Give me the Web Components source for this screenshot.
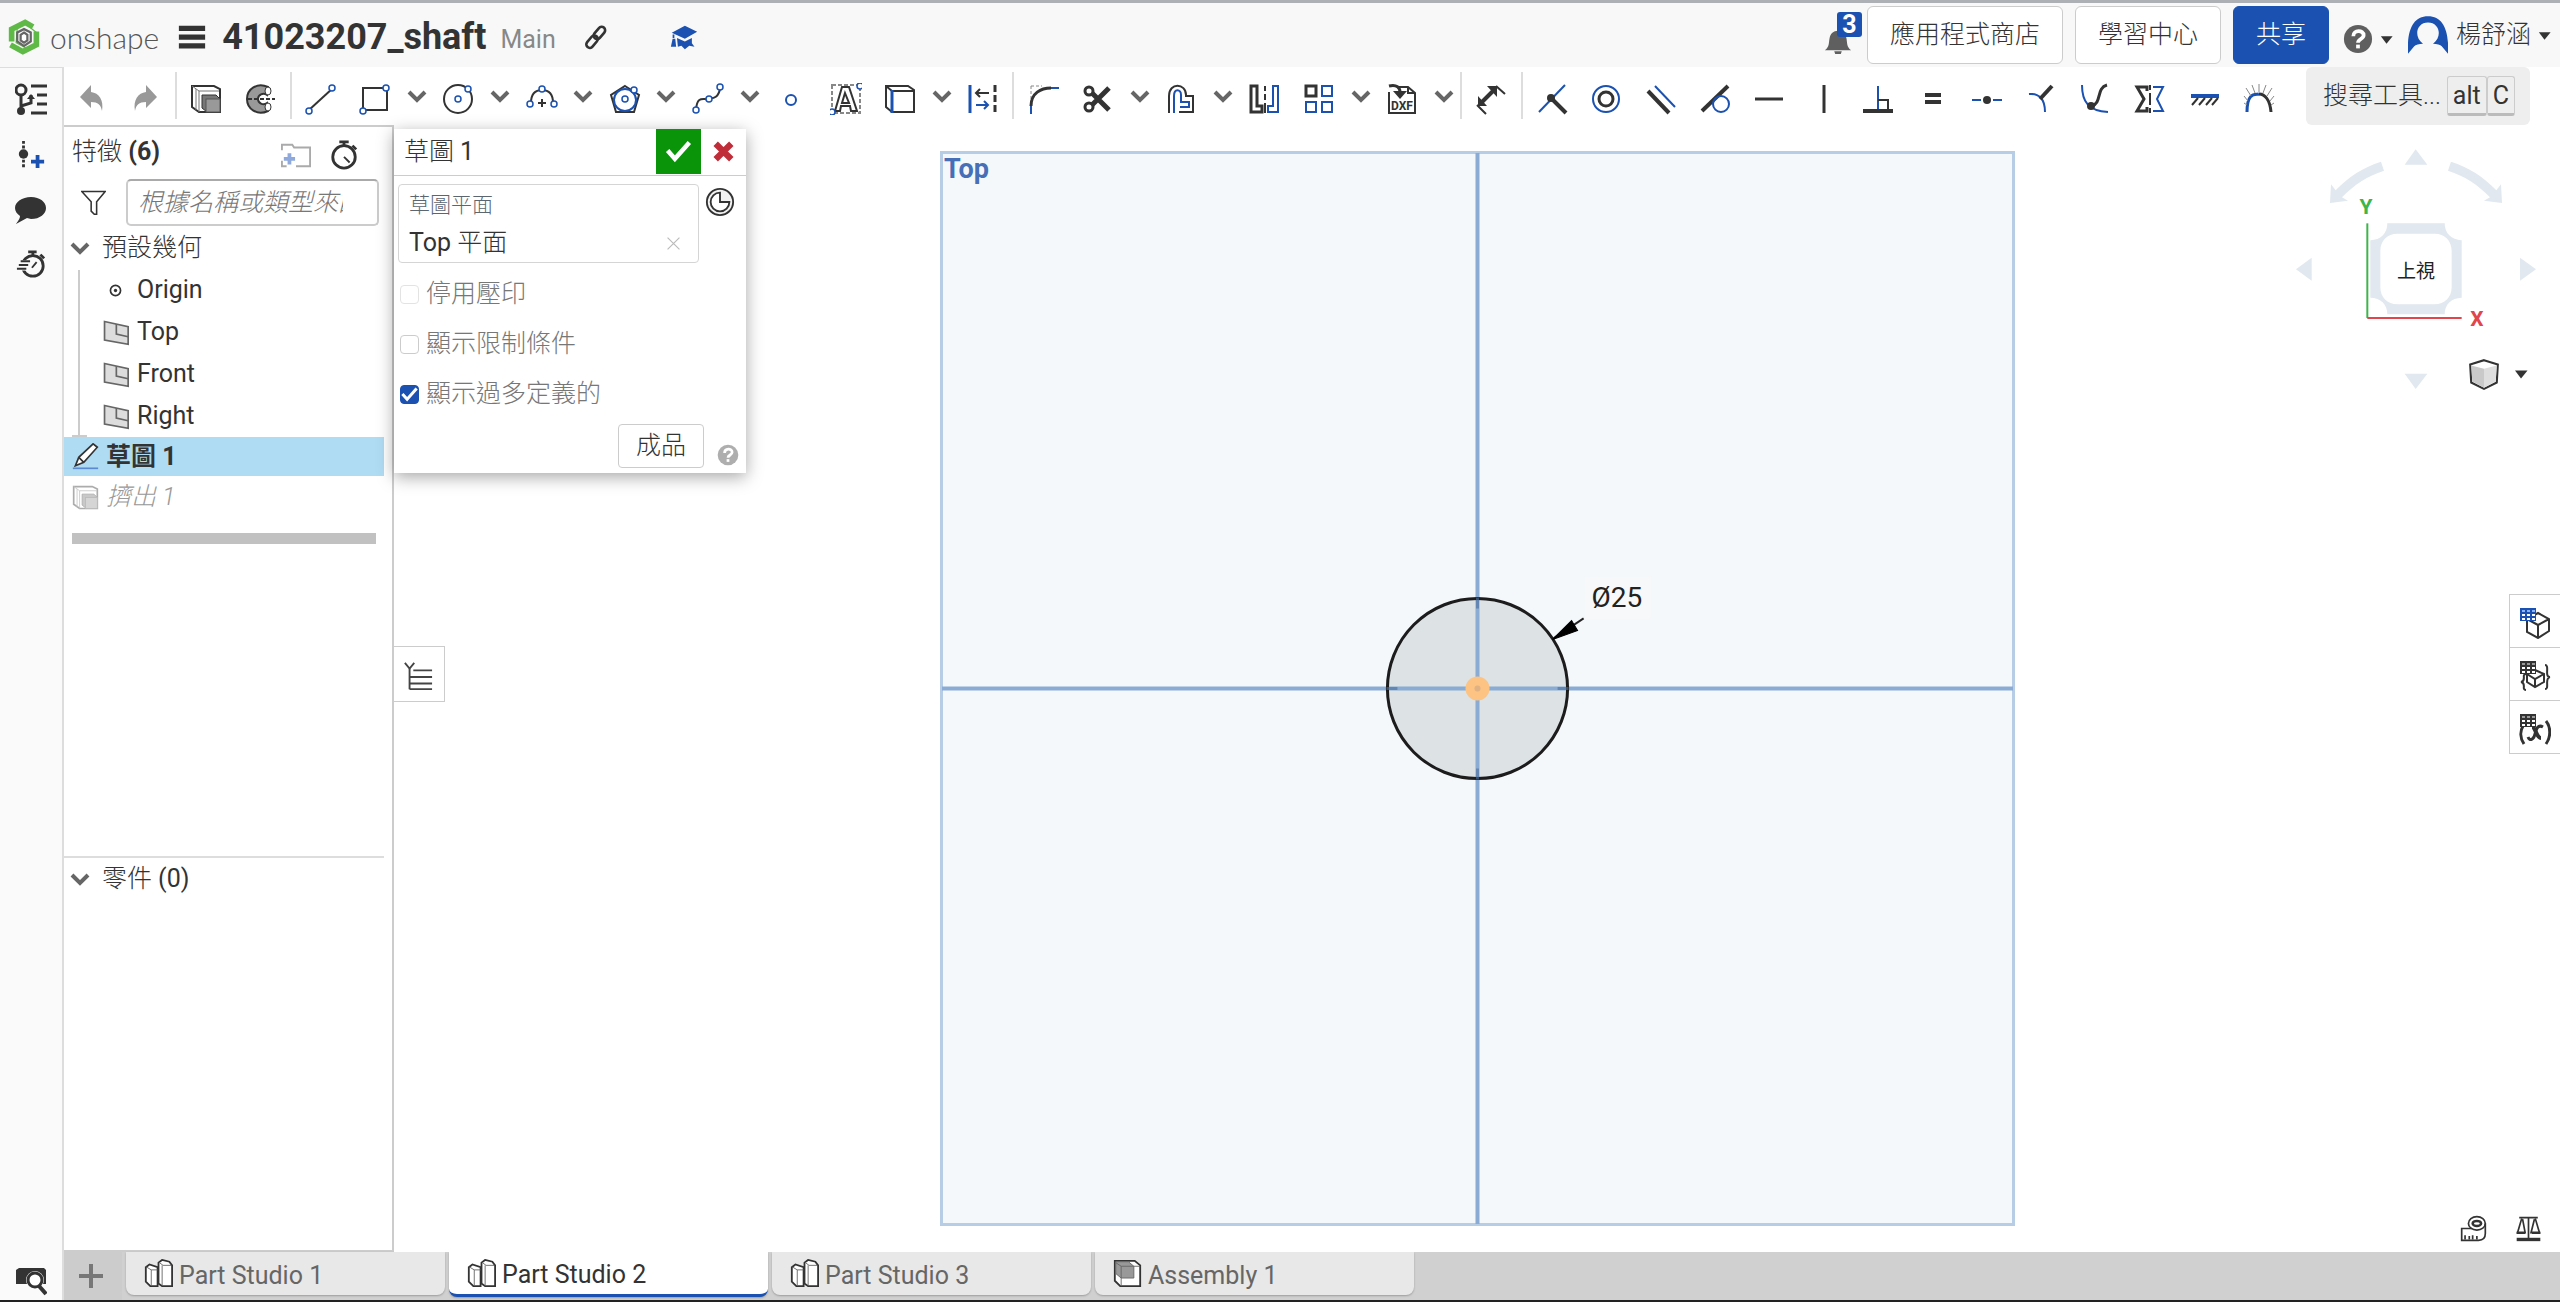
<!DOCTYPE html>
<html lang="zh-Hant">
<head>
<meta charset="utf-8">
<title>41023207_shaft | Part Studio 2</title>
<style>
html,body{margin:0;height:100%}
body{font:400 25px/30px Roboto,"Noto Sans CJK TC",sans-serif;color:#333;background:#fff;overflow:hidden}
</style>
</head>
<body>
<os-app></os-app>
<script>
const K='#333', B='#1b52b1';
const dot=(x,y,r=3)=>`<circle cx="${x}" cy="${y}" r="${r}" fill="#fff" stroke="${B}" stroke-width="1.5"/>`;
const ln=(d,c=K,w=2,x='')=>`<path d="${d}" fill="none" stroke="${c}" stroke-width="${w}" ${x}/>`;
const gridGlyph=(c,l)=>`<rect x="1" y="1" width="16" height="13" fill="${c}"/><g fill="${l}"><path d="M3 3h3v2H3zM8 3h3v2H8zM13 3h3v2h-3z"/></g><g fill="#fff"><path d="M3 7h3v2H3zM8 7h3v2H8zM13 7h3v2h-3zM3 11h3v2H3zM8 11h3v2H8zM13 11h3v2h-3z"/></g>`;
const ICONS={
 logo:ln('M5 20V9L17 3l7 4','#5fb946',5)+ln('M27 11v12l-12 6-11-6','#5fb946',5)+ln('M10 8l-1 13 9 5M22 8l5 4','#5fb946',1)+`<path d="M16 9l6 3v8l-6 4-6-4v-8z" fill="#fff" stroke="#666" stroke-width="2"/><path d="M16 12l3 2v5l-3 2-3-2v-5z" fill="#fff" stroke="#666" stroke-width="2"/>`,
 menu:ln('M1 6H31M1 16H31M1 26H31',K,6),
 link:`<g transform="rotate(-50 16 16)" fill="none" stroke="${K}" stroke-width="3"><rect x="1" y="12" width="16" height="8" rx="4"/><rect x="14" y="12" width="16" height="8" rx="4"/></g>`,
 cap:`<path fill="${B}" d="M2 11L17 3l14 7-14 8zM8 17l9 4 8-4v6l3 4-6-1-5 4-4-4-4 1zM3 13h2v4H3zM3 18h3l1 9H1z"/>`,
 bell:`<path fill="#5f5f5f" d="M2 27c5-4 4-8 5-13 1-5 4-8 9-8s8 3 9 8c1 5 0 9 5 13zM12 28h8l-1 3h-6z"/>`,
 help:`<circle cx="16" cy="16" r="15" fill="#5f5f5f"/><path d="M11 13c0-7 11-7 11-1 0 4-6 4-6 8" fill="none" stroke="#fff" stroke-width="4"/><rect x="14" y="22" width="4" height="4" fill="#fff"/>`,
 user:`<path fill="${B}" d="M0 31C-1 12 4 1 16 1s17 11 16 30l-5-6c-1-1-4-2-7-2 8-6 5-17-4-17S4 17 12 23c-3 0-6 1-7 2z"/>`,
 down:`<path d="M4 9h25L16 25z" fill="${K}"/>`,
 chev:ln('M8 12l8 8 8-8','#666',4),
 undo:`<path fill="#999" d="M5 14L16 2v7c8 1 13 8 11 19-1-6-4-9-11-9v6z"/>`,
 redo:`<path fill="#999" d="M27 14L16 2v7C8 10 3 17 5 28c1-6 4-9 11-9v6z"/>`,
 extrude:`<path d="M2 3H24l6 3V29H9L2 24z" fill="#fff" stroke="${K}" stroke-width="2"/><path d="M2 3l7 5h20M9 8v21M6 6v21" fill="none" stroke="#777"/><path d="M12 12h14l4 4v13H17l-5-4z" fill="#777" stroke="${K}"/><rect x="16" y="16" width="14" height="13" fill="#999" stroke="#555"/>`,
 revolve:`<path d="M24 4C13-1 3 6 3 16s10 17 21 12l-1-8c-4 3-9 0-9-4s5-7 9-4z" fill="#999" stroke="${K}" stroke-width="2"/><ellipse cx="24" cy="8" rx="3" ry="4" fill="#fff" stroke="${K}"/><ellipse cx="24" cy="24" rx="3" ry="4" fill="#fff" stroke="${K}"/>${ln('M4 16H31',K,2,'stroke-dasharray="4 2"')}`,
 line:ln('M4 27L28 5')+dot(4,28)+dot(27,5),
 rect:`<rect x="4" y="5" width="24" height="22" fill="#fff" stroke="${K}" stroke-width="2"/>`+dot(4,28)+dot(27,5),
 circle:`<circle cx="16" cy="16" r="14" fill="none" stroke="${K}" stroke-width="2"/>`+dot(16,16)+dot(26,6),
 arc:ln('M5 20C5 10 10 7 16 7s11 3 11 13')+dot(16,6)+dot(4,21)+dot(28,21)+ln('M12 20h8M16 16v8'),
 polygon:`<path d="M16 3L30 12 25 29H7L2 12z" fill="none" stroke="${K}" stroke-width="2"/><circle cx="16" cy="17" r="11" fill="none" stroke="${B}" stroke-width="2"/>`+dot(16,16)+dot(25,7),
 spline:ln('M4 27C5 12 12 17 16 16s10 0 12-10')+dot(4,27)+dot(17,16)+dot(28,4),
 point:`<circle cx="16" cy="17" r="5" fill="#fff" stroke="${B}" stroke-width="2"/>`,
 text:`<rect x="2" y="2" width="28" height="28" fill="none" stroke="#888" stroke-width="2" stroke-dasharray="4 2"/><path d="M12 4h7l8 24h-6l-1-5h-9l-1 5H5z" fill="#fff" stroke="${K}" stroke-width="2"/><path d="M15 10l4 10h-7z" fill="#fff" stroke="${K}" stroke-width="2"/>`+dot(2,29)+dot(30,3),
 use:`<path d="M2 3H24l6 4V29H8L2 24z" fill="#fff" stroke="${K}" stroke-width="2"/>${ln('M2 3l6 5h22')+ln('M8 7V30',B,3)}`,
 constr:ln('M3 2V30',B,3)+ln('M28 2V30',K,3,'stroke-dasharray="7 3"')+ln('M9 10H22M13 6l-4 4 4 4')+ln('M9 22H21M17 18l4 4-4 4',B),
 fillet:ln('M3 3H14M3 3V16','#888',1,'stroke-dasharray="3 2"')+ln('M3 31V22M22 5H31',B)+ln('M3 23C3 10 13 5 23 5',K,3),
 trim:`<circle cx="7" cy="8" r="4" fill="none" stroke="${K}" stroke-width="3"/><circle cx="7" cy="24" r="4" fill="none" stroke="${K}" stroke-width="3"/>${ln('M10 10L27 27M10 22L27 5',K,5)}`,
 offset:ln('M4 30V13C4-1 21 0 21 12V13H28V29H14')+ln('M9 30V13C9 5 16 6 16 12V19H24V24H15',B),
 mirror:ln('M3 3h6v20h5v6H3z',K,3)+ln('M17 3v5M17 11v6M17 20v10',K)+ln('M30 3h-5v20h-5v6h10z',B),
 pattern:`<rect x="3" y="3" width="10" height="10" fill="none" stroke="${K}" stroke-width="3"/><g fill="none" stroke="${B}" stroke-width="2"><rect x="19" y="3" width="10" height="10"/><rect x="3" y="19" width="10" height="10"/><rect x="19" y="19" width="10" height="10"/></g>`,
 dxf:`<path d="M3 9V30H29V10L22 4H13M22 4v6h7" fill="none" stroke="${K}" stroke-width="2"/>${ln('M3 3c8-2 11 2 11 6',K,3)}<path d="M7 8h14l-7 8z" fill="${K}"/><text x="16" y="27" text-anchor="middle" font-size="12" font-weight="700" fill="${K}">DXF</text>`,
 dim:ln('M6 20L19 7',K,4)+`<path d="M3 23V13l9 10zM22 3v11L12 3z" fill="${K}"/>`+ln('M2 22l9 9M21 3l9 8'),
 coincident:ln('M3 29L29 2',B)+ln('M15 15L30 30',K,4)+`<circle cx="15" cy="15" r="4" fill="${K}"/>`,
 concentric:`<circle cx="16" cy="16" r="13" fill="none" stroke="${B}" stroke-width="2"/><circle cx="16" cy="16" r="7" fill="none" stroke="${K}" stroke-width="3"/>`,
 parallel:ln('M3 8L24 30',K,4)+ln('M10 3L30 24',B),
 tangent:ln('M3 28L29 3',K,4)+`<circle cx="22" cy="21" r="8" fill="none" stroke="${B}" stroke-width="2"/>`,
 horiz:ln('M2 16H30',K,3), vert:ln('M16 2V30',K,3),
 perp:ln('M16 3V27',B)+ln('M16 17h10v10')+ln('M1 28H31',K,4),
 equal:ln('M8 12H24M8 19H24',K,4),
 midpoint:ln('M1 17H10M22 17H31',B)+`<circle cx="16" cy="17" r="4" fill="${K}"/>`,
 normal:ln('M4 11C14 10 20 16 20 29',B)+ln('M15 16L27 3',K,4),
 pierce:ln('M2 2C2 18 8 28 28 29',B)+ln('M12 23C22 20 16 5 27 2',K,3)+`<circle cx="11" cy="23" r="4" fill="${K}"/>`,
 symmetric:ln('M13 8V4H3l7 12L3 28h10v-4',K,3)+ln('M16 2v5M16 10v12M16 25v5')+ln('M19 4h10l-6 12 6 12H19',B),
 fix:ln('M2 13H30',B,4)+ln('M9 15l-6 7M16 15l-6 7M23 15l-6 7M29 15l-6 7',K),
 curvature:ln('M4 29C4 8 13 12 16 11',B,3)+ln('M16 11c6 0 11 6 12 18',K,3)+ln('M16 9V1M12 10L9 2M20 10l3-8M8 13L3 5M24 13l5-8M5 18l-4-5M27 18l4-5M4 22l-3-2M28 22l3-2','#888',1),
 tree:`<circle cx="6" cy="7" r="5" fill="none" stroke="${K}" stroke-width="3"/><circle cx="6" cy="28" r="4" fill="${K}"/>${ln('M6 12V28M6 23l10-3v-8',K,3)}<path d="M12 16l4-5 4 5z" fill="${K}"/>${ln('M16 3H32M22 12H32M22 21H32M16 30H32',K,3)}`,
 insert:ln('M8 2V32',K,3,'stroke-dasharray="3 2"')+`<circle cx="8" cy="16" r="5" fill="${K}"/>`+ln('M16 24H30M23 17V31',B,4),
 comment:`<path d="M16 4c9 0 15 5 15 11s-6 11-15 11l-4-1-11 6c3-4 4-6 4-8-3-2-5-5-5-8C0 9 7 4 16 4z" fill="${K}"/>`,
 timer:`<circle cx="18" cy="18" r="11" fill="none" stroke="${K}" stroke-width="3"/>${ln('M13 3h9M18 3v4M26 6l4 4',K,3)+ln('M17 20l5-6')}<path d="M0 12h14v11H0z" fill="#fafafa"/>${ln('M5 13H15M3 17H13M1 21H11')}`,
 stop:`<circle cx="16" cy="18" r="12" fill="none" stroke="${K}" stroke-width="3"/>${ln('M11 2h10M16 2v4M25 6l4 4',K,3)+ln('M16 18l6 6')}`,
 find:`<path d="M1 6l3-2h25l2 2v14H1z" fill="${K}"/><circle cx="20" cy="16" r="9" fill="#fafafa"/><circle cx="20" cy="16" r="7" fill="#fff" stroke="${K}" stroke-width="3"/>${ln('M24 22l7 8',K,4)}`,
 folder:ln('M1 11V5h11l2 3h17v20H16M1 22v6h5','#aaa')+ln('M3 20H15M9 14V26','#8fa9dc',4),
 funnel:`<path d="M1 2H31L20 15V31H17L13 27V15z" fill="#fff" stroke="${K}" stroke-width="2"/>`,
 origin:`<circle cx="16" cy="16" r="6" fill="#fff" stroke="${K}" stroke-width="2"/><circle cx="16" cy="16" r="2" fill="${K}"/>`,
 plane:`<path d="M3 3L31 9V30L3 25z" fill="#ddd" stroke="#666" stroke-width="2"/>${ln('M17 6V18L31 21','#666')}`,
 pencil:`<path d="M4 27L8 17 25 1l5 4L14 23z" fill="#fff" stroke="${K}" stroke-width="2"/>${ln('M8 17l6 6')+ln('M1 30H31','#5b8ad2')}`,
 check:ln('M4 15l8 9L28 6','#fff',5), cross:ln('M6 6L26 26M26 6L6 26','#c02d38',8), thin:ln('M6 6L26 26M26 6L6 26','#bbb'),
 section:`<circle cx="16" cy="16" r="14" fill="#f2f2f2" stroke="${K}" stroke-width="2"/><path d="M16 6A10 10 0 1 0 26 16H16z" fill="#fff" stroke="${K}" stroke-width="2"/>`,
 outline:ln('M2 2l5 6 5-6','#444',2)+ln('M11 10H31M11 17H31M11 24H31M11 30H31M7 8V30M7 17h4M7 24h4M7 30h4','#444'),
 cube:`<path d="M16 3L29 7 28 24 16 30 4 24 3 7z" fill="#fff" stroke="${K}" stroke-width="2"/><path d="M4 8L16 11V29L5 23z" fill="#c9c9c9"/><path d="M28 8L16 11V29L27 23z" fill="#dedede"/>`,
 cfg:`<path d="M19 6L30 12V24L19 31 8 25V12zM8 12l11 6 11-6M19 18V30" fill="none" stroke="${K}" stroke-width="2"/>`+gridGlyph(B,'#8ab4f5'),
 props:`<path d="M16 10L25 14V22L16 27 8 22V14zM8 14l8 5 9-5M16 19v8" fill="none" stroke="${K}" stroke-width="2"/>${ln('M7 14c-5 0 1 7-5 8 6 1 0 8 5 8M26 5c5 0-1 12 5 12-6 1 0 12-5 12')}`+gridGlyph(K,'#999'),
 vars:ln('M4 13C1 18 1 25 5 31M27 8C32 14 32 24 27 31',K,3)+ln('M9 24c2 5 6 2 7-3s3-10 8-7',K,3)+ln('M13 14c4 0 4 11 9 11',K,4)+gridGlyph(K,'#999'),
 tape:`<path d="M2 16H14M2 15V30H22c6 0 8-4 8-8V10" fill="none" stroke="${K}" stroke-width="2"/><ellipse cx="20" cy="10" rx="10" ry="8" fill="none" stroke="${K}" stroke-width="2"/><ellipse cx="20" cy="10" rx="5" ry="3" fill="none" stroke="${K}" stroke-width="3"/>${ln('M6 29v-5M11 29v-4M15 29v-5M20 29v-4')}`,
 scale:ln('M5 3H27M16 3V28')+ln('M8 4L3 21h9L9 5M23 5l-4 16h10L24 4',K,2)+ln('M2 21H12M20 21H30',K,3)+ln('M2 29H30',K,4),
 plus:ln('M16 4V28M4 16H28','#777',4),
 studio:`<path d="M2 9l4-3 9 3V30H7L2 25z" fill="#fff" stroke="${K}" stroke-width="2"/><path d="M16 4l4-3 8 2 3 4V30H20l-4-3z" fill="#fff" stroke="${K}" stroke-width="2"/>${ln('M3 9l5 3h7M8 12V29M17 4l4 3h9M20 7V29','#666',1)}`,
 assembly:`<path d="M2 2H24l6 5V30H8L2 24z" fill="#fff" stroke="${K}" stroke-width="2"/><path d="M3 3H17l6 5V21H9L3 16z" fill="#999" stroke="#666"/>${ln('M3 4l6 4h21M9 8v22','#666',1)}`
};
class El extends HTMLElement{
  connectedCallback(){
    if(this.shadowRoot) return;
    this.attachShadow({mode:'open'}).innerHTML='<style>*{box-sizing:border-box}button,input,select{font:inherit;color:inherit;margin:0}button{border:0;background:none;padding:0;cursor:pointer}a{color:inherit;text-decoration:none}</style>'+this.view();
  }
}
const define=(n,view)=>customElements.define(n,class extends El{view(){return view(this)}});

define('os-icon',el=>`<style>:host{display:block;flex:none;width:var(--s,32px);height:var(--s,32px)}svg{display:block;width:100%;height:100%}</style><svg viewBox="0 0 32 32" aria-hidden="true">${ICONS[el.getAttribute('name')]}</svg>`);

define('os-header',()=>`<style>
:host{display:flex;align-items:center;height:64px;padding:0 8px 0 6px;background:#f8f8f8;--s:28px}
.left,.right,.help,.who{display:flex;align-items:center}
.left{flex:1;padding-top:3px}
.brand{display:flex;align-items:center;gap:8px;margin-right:19px;--s:36px;font:300 30px/36px Lato,sans-serif;color:#555}
h1{margin:0 14px 0 16px;font-size:36px;line-height:44px}
.main{color:#888;padding-top:6px;margin-right:26px}
.cap{margin-left:60px}
.bell{position:relative;--s:30px;padding-top:10px;margin-right:14px}
.bell b{position:absolute;left:14px;top:-3px;width:25px;height:25px;background:#1b52b1;color:#fff;line-height:25px;border-radius:3px}
.btn{height:58px;padding:0 22px;border:1px solid #ccc;border-radius:6px;background:#fff;margin-right:12px;font-weight:300}
.share{background:#1b52b1;border-color:#1b52b1;color:#fff;margin-right:14px}
.help{--s:30px;gap:6px;padding-top:8px;margin-right:14px}
.who{gap:8px;--s:40px;font-weight:300}
.tri{--s:15px}
.who .tri{margin-left:-2px}
</style>
<div class="left"><a class="brand" href="#"><os-icon name="logo"></os-icon>onshape</a>
<button aria-label="menu"><os-icon name="menu"></os-icon></button><h1>41023207_shaft</h1><span class="main">Main</span>
<button aria-label="link"><os-icon name="link"></os-icon></button><button class="cap" aria-label="learn"><os-icon name="cap"></os-icon></button></div>
<div class="right"><button class="bell" aria-label="notifications"><os-icon name="bell"></os-icon><b>3</b></button>
<button class="btn">應用程式商店</button><button class="btn">學習中心</button><button class="btn share">共享</button>
<button class="help" aria-label="help"><os-icon name="help"></os-icon><os-icon class="tri" name="down"></os-icon></button>
<button class="who"><os-icon name="user"></os-icon>楊舒涵<os-icon class="tri" name="down"></os-icon></button></div>`);

define('os-rail',()=>`<style>:host{display:flex;flex-direction:column;align-items:center;width:64px;flex:none;background:#fafafa;border-right:2px solid #ddd;border-top:1px solid #ddd;padding:15px 0 4px;--s:32px}
button{height:32px;margin-bottom:23px}.mid{--s:30px}.last{margin:auto 0 0}</style>
<button aria-label="tree"><os-icon name="tree"></os-icon></button><button class="mid" aria-label="insert"><os-icon name="insert"></os-icon></button><button aria-label="comments"><os-icon name="comment"></os-icon></button><button class="mid" aria-label="performance"><os-icon name="timer"></os-icon></button><button class="last" aria-label="search"><os-icon name="find"></os-icon></button>`);

const TOOLS='undo redo | extrude revolve | line rect+ circle+ arc+ polygon+ spline+ point text use+ constr | fillet trim+ offset+ mirror pattern+ dxf+ | dim | coincident concentric parallel tangent horiz vert perp equal midpoint normal pierce symmetric fix curvature'.split(' ');
define('os-toolbar',()=>`<style>
:host{display:flex;height:58px;flex:none;background:#fff}
.tools{flex:1;display:flex;align-items:stretch}
.t{flex:17 1 0;min-width:0;display:flex;justify-content:center;align-items:center;padding-top:6px}
.c{flex:9 1 0;min-width:0;display:flex;justify-content:center;align-items:center;--s:32px}
.sep{width:2px;margin:5px 2px 6px;background:#ddd;flex:none}
.search{display:flex;align-items:center;width:224px;margin:0 30px 0 20px;background:#eee;border-radius:6px;padding:0 15px 0 17px;font-weight:300}
.search span{flex:1;text-align:left}
kbd{font:inherit;font-weight:400;height:40px;line-height:38px;padding:0 5px;border:1px solid #ccc;border-bottom:3px solid #bbb;border-radius:3px}
</style><div class="tools">${TOOLS.map(t=>t==='|'?'<i class="sep"></i>':`<button class="t" aria-label="${t.replace('+','')}"><os-icon name="${t.replace('+','')}"></os-icon></button>`+(t.endsWith('+')?'<button class="c" aria-label="more"><os-icon name="chev"></os-icon></button>':'')).join('')}</div>
<button class="search"><span>搜尋工具...</span><kbd>alt</kbd><kbd>C</kbd></button>`);

define('os-row',()=>`<style>
:host{display:flex;align-items:center;gap:8px;height:42px;padding-left:8px;--s:27px}
:host([deep]){padding-left:38px}
:host([top]){font-weight:300;--s:32px;gap:6px;padding-left:0}
:host([active]){height:39px;background:#b0dcf3;font-weight:700}
:host([off]){color:#999;font-style:italic;font-weight:300}
:host([active]),:host([off]){gap:7px}
</style><slot name="icon"></slot><slot></slot>`);

define('feature-panel',()=>`<style>
:host{display:flex;flex-direction:column;width:330px;flex:none;border-top:2px solid #ccc;border-right:2px solid #ccc;border-bottom:2px solid #ccc;background:#fff;padding-right:8px}
.head{display:flex;align-items:center;height:50px;padding:0 25px 0 8px;gap:18px;--s:30px}
.head span{flex:1}.head button{padding-top:6px}
.cjk{font-weight:300}
.filter{display:flex;align-items:center;padding:0 5px 0 17px;gap:20px;height:50px;--s:25px}
input{flex:1;min-width:0;height:47px;border:2px solid #ccc;border-top-color:#aaa;border-radius:5px;padding:0 34px 0 10px;background:#fff;font-weight:300}
input::placeholder{font-style:italic;color:#777;opacity:1}
.group{position:relative}
.group::before{content:"";position:absolute;left:14px;top:1px;bottom:2px;width:2px;background:#ccc}
.group::after{content:"";position:absolute;left:8px;bottom:0;width:15px;height:2px;background:#ccc}
.bar{height:11px;background:#c1c1c1;margin:15px 8px 0;flex:none}
.parts{margin-top:312px;border-top:2px solid #ddd}
</style>
<div class="head"><span><span class="cjk">特徵</span> <b>(6)</b></span><button aria-label="folder"><os-icon name="folder"></os-icon></button><button aria-label="regen"><os-icon name="stop"></os-icon></button></div>
<label class="filter"><os-icon name="funnel"></os-icon><input placeholder="根據名稱或類型來篩選" aria-label="filter"></label>
<os-row top><os-icon slot="icon" name="chev"></os-icon>預設幾何</os-row>
<div class="group"><os-row deep><os-icon slot="icon" name="origin"></os-icon>Origin</os-row>
${['Top','Front','Right'].map(n=>`<os-row deep><os-icon slot="icon" name="plane"></os-icon>${n}</os-row>`).join('')}</div>
<os-row active><os-icon slot="icon" name="pencil"></os-icon>草圖 1</os-row>
<os-row off><os-icon slot="icon" name="extrude" style="opacity:.4"></os-icon>擠出 1</os-row>
<div class="bar"></div>
<div class="parts"><os-row top><os-icon slot="icon" name="chev"></os-icon><span>零件 <span style="font-weight:400">(0)</span></span></os-row></div>`);

define('sketch-dialog',()=>`<style>
:host{display:block;width:352px;height:344px;background:#fff;box-shadow:0 4px 16px rgba(0,0,0,.35)}
.head{display:flex;height:47px;border-bottom:1px solid #ccc;padding-left:10px;align-items:center;font-weight:300}
.head span{flex:1}.ok,.no{width:45px;height:45px;display:grid;place-items:center;align-self:start}.ok{background:#0a940a;--s:29px}.no{--s:25px}
.pick{display:flex;gap:6px;padding:8px 11px 0 4px}
.field{flex:1;height:79px;border:1px solid #d5d5d5;border-radius:4px;padding:5px 15px 0 10px}
.lab{font-size:21px;font-weight:300;color:#5b6670}
.val{display:flex;align-items:center;justify-content:space-between;margin-top:8px;--s:19px}
.val i{font-style:normal;font-weight:300}
label{display:flex;align-items:center;gap:7px;height:50px;padding-left:6px;font-weight:300;color:#777}
.opts{padding-top:6px}
input{appearance:none;width:19px;height:19px;border:1px solid #ccc;border-radius:4px;background:#fff}
input:disabled{border-color:#e3e3e3}
.tick{display:grid}.tick>*{grid-area:1/1;--s:19px}
input:checked{background:#1b52b1;border-color:#1b52b1}
.foot{display:flex;justify-content:flex-end;align-items:flex-start;gap:13px;padding:5px 7px 0;--s:22px}
.done{height:44px;width:86px;border:1px solid #ccc;border-radius:4px;font-weight:300}
.q{opacity:.5;padding-top:20px}
</style>
<div class="head"><span>草圖 <b>1</b></span><button class="ok" aria-label="accept"><os-icon name="check"></os-icon></button><button class="no" aria-label="cancel"><os-icon name="cross"></os-icon></button></div>
<div class="pick"><div class="field"><div class="lab">草圖平面</div><div class="val"><span>Top <i>平面</i></span><button aria-label="clear"><os-icon name="thin"></os-icon></button></div></div><button aria-label="section" style="height:36px;--s:30px"><os-icon name="section"></os-icon></button></div>
<div class="opts"><label><input type="checkbox" disabled>停用壓印</label><label><input type="checkbox">顯示限制條件</label><label><span class="tick"><input type="checkbox" checked><os-icon name="check"></os-icon></span>顯示過多定義的</label></div>
<div class="foot"><button class="done">成品</button><button class="q" aria-label="help"><os-icon name="help"></os-icon></button></div>`);

define('view-cube',()=>`<style>:host{display:block;width:280px;height:280px}svg{display:block}</style>
<svg width="280" height="280" viewBox="0 0 280 280"><g transform="scale(.33333)"><g fill="#e1e8ef"><path d="M407 58l35 46h-68zM407 777l35-46h-68zM48 418l47-35v69zM768 418l-48-35v69z"/><path d="M303 95l9 27C262 138 220 166 186 202l18 10-54 7 3-56 14 18C206 140 250 112 303 95z"/><path d="M513 95l-9 27c50 16 92 44 126 80l-18 10 54 7-3-56-14 18C610 140 566 112 513 95z"/><path fill-rule="evenodd" d="M322 280H494c0 30 20 50 51 51V503c-31 1-51 20-51 50H322c0-30-20-50-51-50V331c31-1 51-20 51-51zM352 311c-30 0-51 21-51 51V472c0 30 21 51 51 51H464c30 0 51-21 51-51V362c0-30-21-51-51-51z"/></g>
<path d="M262 280V564" stroke="#3db54a" stroke-width="6"/><path d="M262 564H545" stroke="#e0464b" stroke-width="6"/></g>
<g text-anchor="middle" font-weight="700"><text x="86" y="84" font-size="21" fill="#3db54a">Y</text><text x="197" y="196" font-size="21" fill="#e0464b">X</text><text x="136" y="148" font-size="19" font-weight="400" fill="#222">上視</text></g></svg>`);

define('graphics-view',()=>`<style>
:host{flex:1;display:flex;justify-content:center;padding:26px 0;position:relative;min-width:0;background:#fff}
.scene{height:100%;aspect-ratio:1;display:block}
sketch-dialog{position:absolute;left:0;top:4px}
view-cube{position:absolute;right:0;top:5px}
.iso{position:absolute;right:31px;top:232px;display:flex;align-items:center;gap:12px;--s:34px}
.iso .tri{--s:16px}
.list{position:absolute;left:0;top:521px;width:51px;height:56px;border:1px solid #ccc;border-left:0;background:#fff;padding:4px 0 0 9px;--s:30px}
.tables{position:absolute;right:0;top:469px;width:51px;border:1px solid #ccc;border-right:0;background:#fff}
.tables button{display:flex;width:100%;height:52px;justify-content:center;align-items:center;padding-top:4px}
.tables button+button{border-top:1px solid #ccc;height:53px}
.measure{position:absolute;right:18px;bottom:10px;display:flex;gap:28px;--s:27px}
</style>
<svg class="scene" viewBox="0 0 1074 1074"><rect x="1" y="1" width="1072" height="1072" rx="2" fill="#f4f8fb" stroke="#b7cce5" stroke-width="4"/>
<circle cx="537" cy="537" r="90" fill="#dde2e5"/><path d="M537 2V1072M2 537H1072" stroke="#8aabd4" stroke-width="4"/>
<circle cx="537" cy="537" r="90" fill="none" stroke="#1c1c1c" stroke-width="3"/><circle cx="537" cy="537" r="12" fill="#fdc383"/><circle cx="537" cy="537" r="3" fill="#dfb183"/>
<path d="M537 446V457M537 617V628M446 537H457M617 537H628" stroke="#4a6f9e" stroke-width="3" opacity=".6"/>
<path d="M643 467L613 487" stroke="#222" stroke-width="2"/><path d="M612 488l19-19 6 10z" stroke="#000" fill="#000"/>
<rect x="644" y="425" width="67" height="43" fill="#f6f8fa"/><text x="651" y="456" font-size="28" fill="#222">Ø25</text>
<text x="4" y="27" font-size="27" font-weight="700" fill="#466fb8">Top</text></svg>
<button class="list" aria-label="list"><os-icon name="outline"></os-icon></button>
<sketch-dialog></sketch-dialog><view-cube></view-cube>
<button class="iso" aria-label="view"><os-icon name="cube"></os-icon><os-icon class="tri" name="down"></os-icon></button>
<div class="tables"><button aria-label="configurations"><os-icon name="cfg"></os-icon></button><button aria-label="properties"><os-icon name="props"></os-icon></button><button aria-label="variables"><os-icon name="vars"></os-icon></button></div>
<div class="measure"><button aria-label="measure"><os-icon name="tape"></os-icon></button><button aria-label="mass"><os-icon name="scale"></os-icon></button></div>`);

define('os-tab',el=>`<style>
:host{display:block;width:319px;height:43px}
a{display:flex;align-items:center;gap:6px;height:100%;padding:0 0 0 18px;background:#e8e8e8;color:#666;border-radius:0 0 8px 8px;box-shadow:0 1px 2px rgba(0,0,0,.25);--s:29px}
:host([active]) a{background:#fff;color:#333;border-bottom:3px solid #1b52b1;height:45px}
span{padding-top:4px}
</style><a href="#"><os-icon name="${el.getAttribute('icon')}"></os-icon><span><slot></slot></span></a>`);

define('tab-bar',()=>`<style>
:host{display:flex;gap:4px;height:48px;flex:none;background:#d0d0d0}
.add{width:58px;padding-right:5px;display:grid;place-items:center;background:#ccc;--s:32px}
</style><button class="add" aria-label="add"><os-icon name="plus"></os-icon></button>
<os-tab icon="studio">Part Studio 1</os-tab><os-tab icon="studio" active>Part Studio 2</os-tab><os-tab icon="studio">Part Studio 3</os-tab><os-tab icon="assembly">Assembly 1</os-tab>`);

define('os-app',()=>`<style>
:host{display:flex;flex-direction:column;height:100vh;box-sizing:border-box;border-top:3px solid #adb0b4;border-bottom:2px solid #222}
.body,.work{flex:1;display:flex;min-height:0}.col{flex:1;display:flex;flex-direction:column;min-width:0}
</style><os-header></os-header><div class="body"><os-rail></os-rail><div class="col"><os-toolbar></os-toolbar><div class="work"><feature-panel></feature-panel><graphics-view></graphics-view></div><tab-bar></tab-bar></div></div>`);
</script>
</body>
</html>
